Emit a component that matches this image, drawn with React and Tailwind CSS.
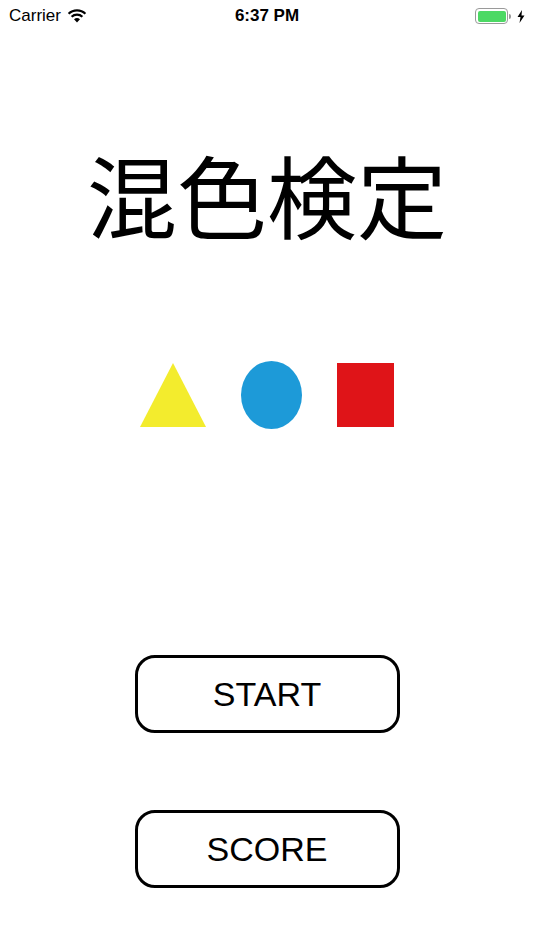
export default function App() {
  return (
    <div className="w-[534px] h-[950px] bg-white flex flex-col items-center relative overflow-hidden" style={{ fontFamily: '"Liberation Sans", Arial, sans-serif' }}>
      <div className="w-full h-[32px] flex items-center justify-between px-[9px] text-[17px] text-black relative">
        <div className="flex items-center gap-[6px]">
          <span>Carrier</span>
          <svg width="20" height="14" viewBox="0 0 20 14">
            <path d="M10 13.5 L13 10.2 A4.6 4.6 0 0 0 7 10.2 Z" fill="black" />
            <path d="M4.6 7.8 A7.8 7.8 0 0 1 15.4 7.8" stroke="black" strokeWidth="2.2" fill="none" />
            <path d="M1.6 4.8 A12 12 0 0 1 18.4 4.8" stroke="black" strokeWidth="2.2" fill="none" />
          </svg>
        </div>
        <span className="absolute left-1/2 -translate-x-1/2 font-semibold">6:37 PM</span>
        <div className="flex items-center gap-[3px]">
          <div className="w-[33px] h-[16px] border border-[#9a9a9a] rounded-[4px] p-[1.5px]">
            <div className="w-full h-full bg-[#4cd964] rounded-[2px]"></div>
          </div>
          <div className="w-[2px] h-[5px] bg-[#9a9a9a] rounded-r-sm -ml-[2px]"></div>
          <svg width="8" height="13" viewBox="0 0 8 13" className="ml-[3px]">
            <path d="M5 0 L0.5 7 H3.5 L2.5 13 L7.5 5.5 H4.5 Z" fill="black" />
          </svg>
        </div>
      </div>
      <div className="mt-[116px] text-[90px] leading-none text-black" style={{ fontFamily: '"Noto Sans CJK JP", "Noto Sans CJK SC", sans-serif' }}>
        混色検定
      </div>
      <div className="mt-[123px] flex items-center">
        <svg width="66" height="64" viewBox="0 0 66 64">
          <polygon points="33,0 66,64 0,64" fill="#f3ec2d" />
        </svg>
        <div className="ml-[35px] w-[61px] h-[68px] rounded-[50%] bg-[#1d9ad8]"></div>
        <div className="ml-[35px] w-[57px] h-[64px] bg-[#df1418]"></div>
      </div>
      <div className="mt-[226px] w-[265px] h-[78px] border-[3px] border-black rounded-[20px] flex items-center justify-center text-[34px] text-black">
        START
      </div>
      <div className="mt-[77px] w-[265px] h-[78px] border-[3px] border-black rounded-[20px] flex items-center justify-center text-[34px] text-black">
        SCORE
      </div>
    </div>
  );
}
